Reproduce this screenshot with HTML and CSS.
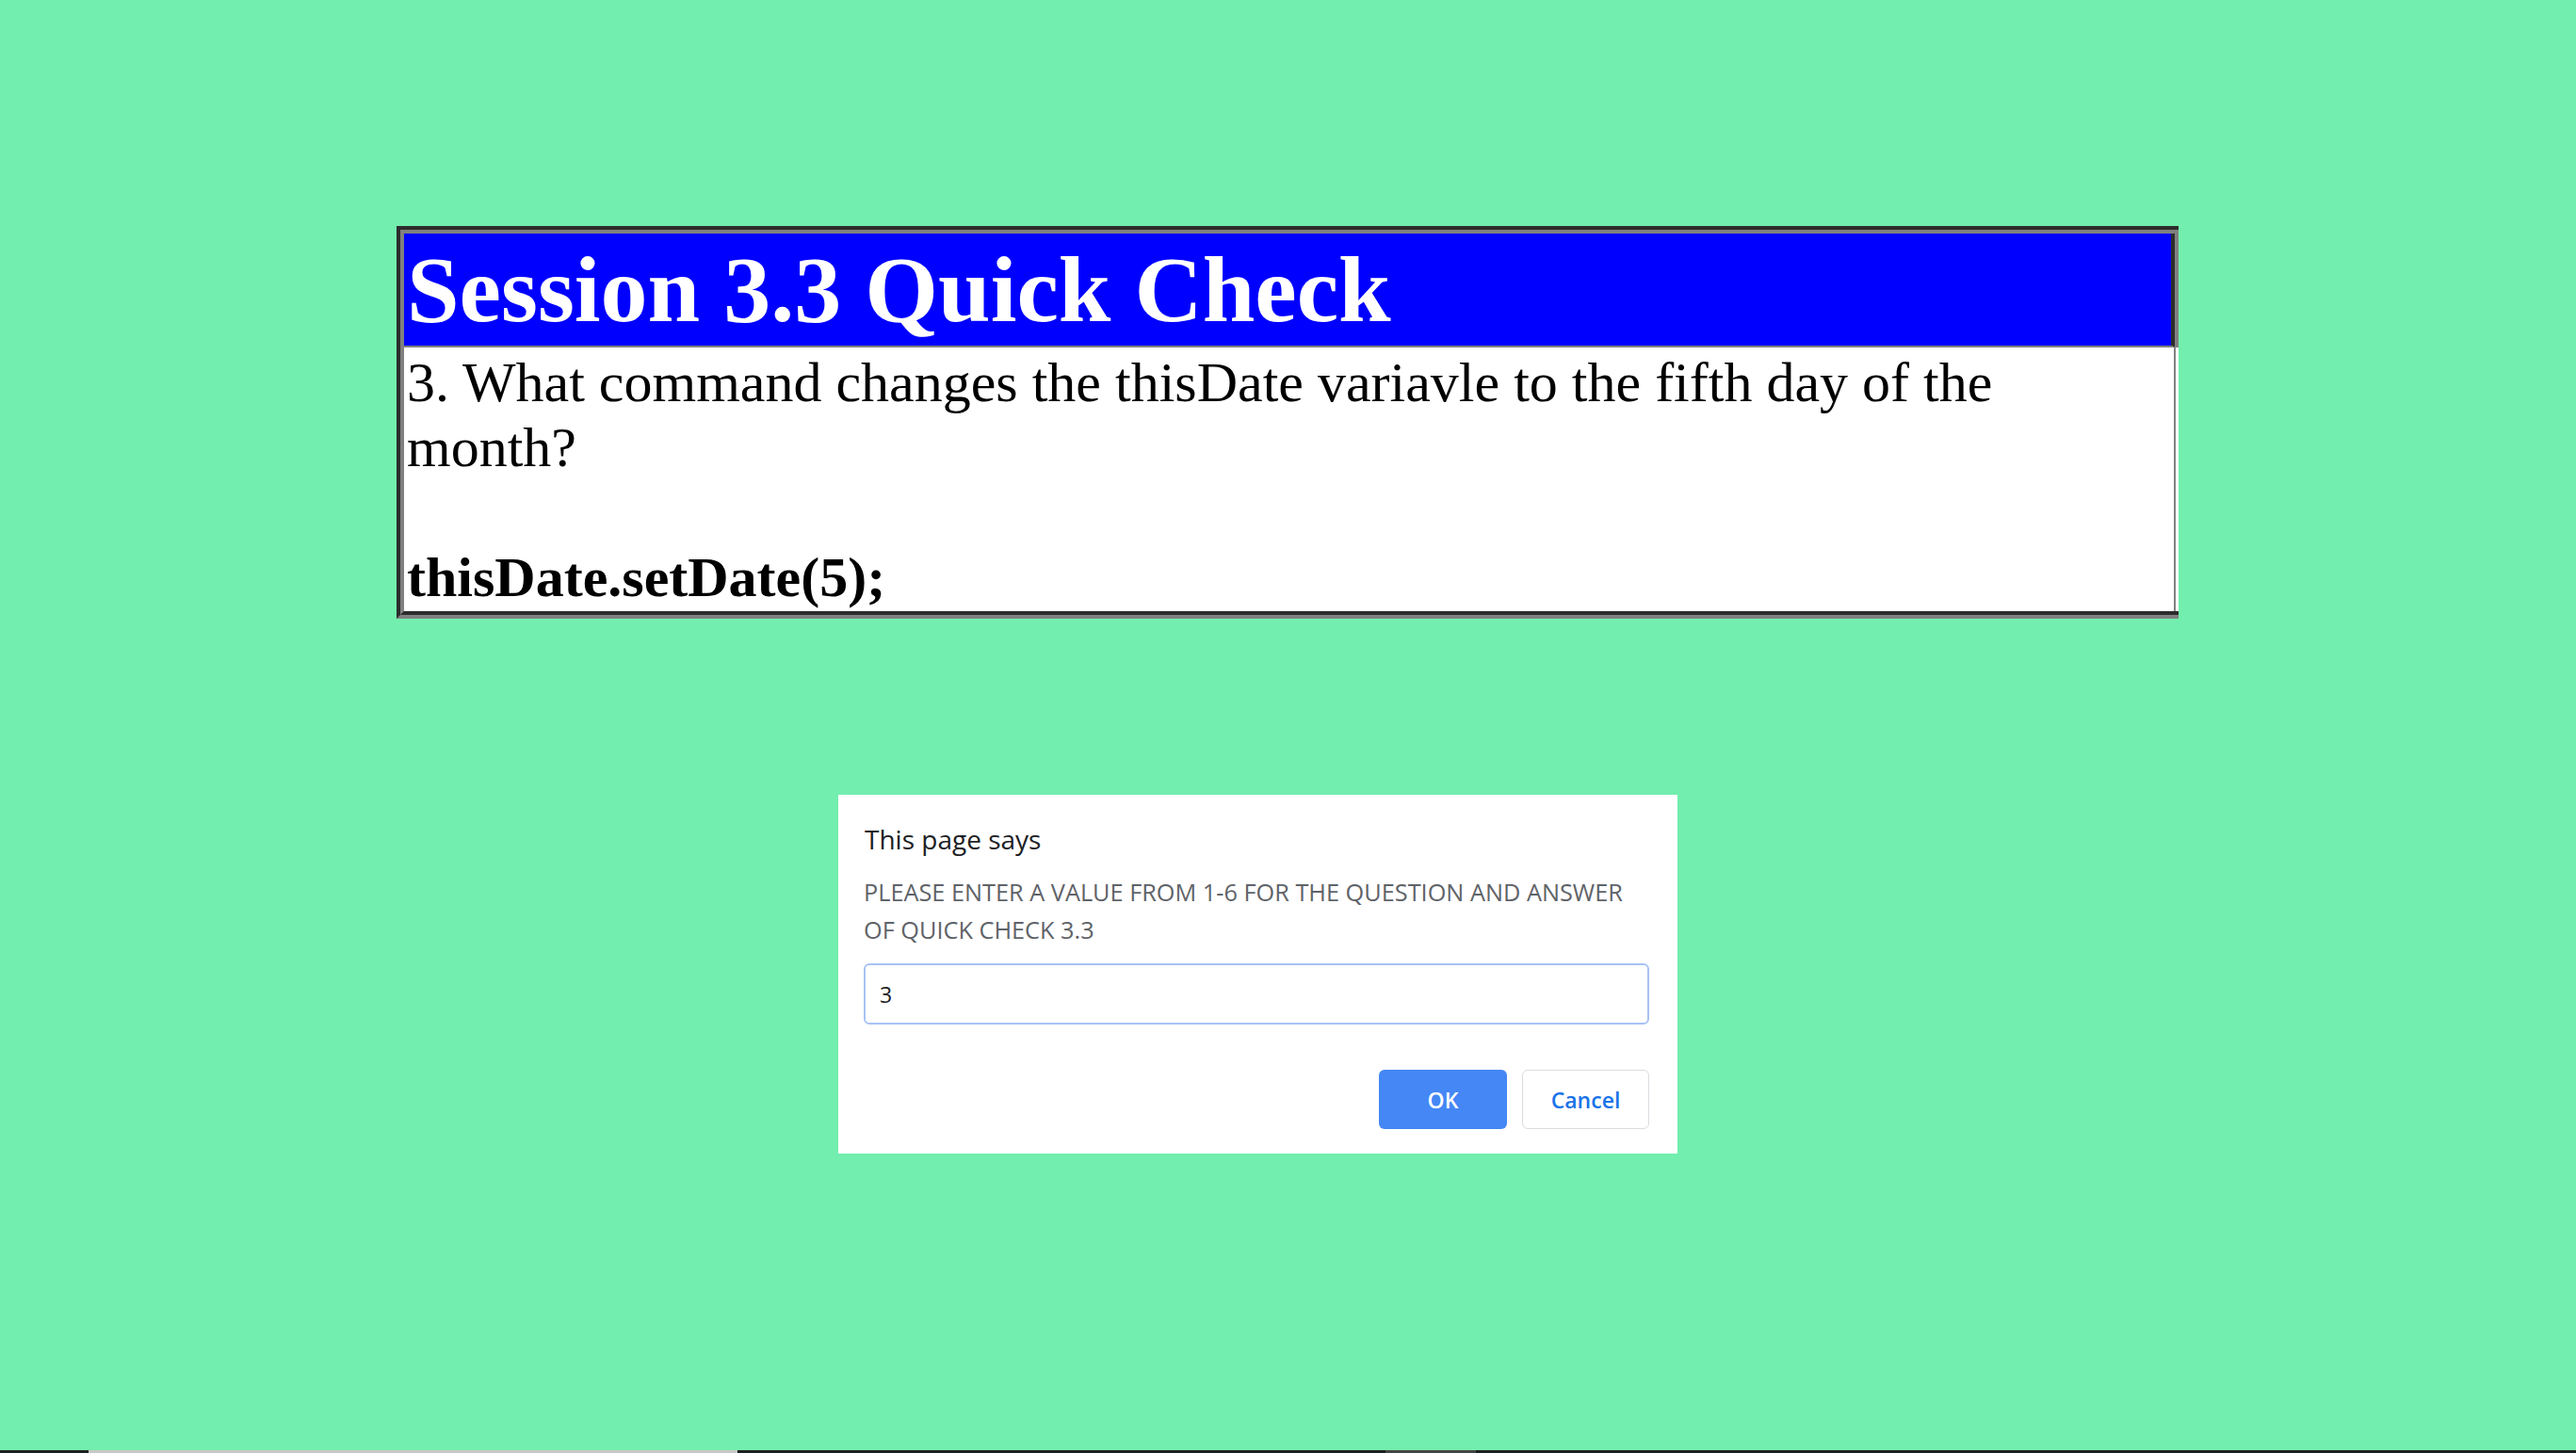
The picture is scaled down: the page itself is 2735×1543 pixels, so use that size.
FILE: index.html
```html
<!DOCTYPE html>
<html lang="en">
<head>
<meta charset="utf-8">
<title>Session 3.3 Quick Check</title>
<link rel="stylesheet" href="styles.css">
</head>
<body>
  <main class="page">
    <section class="card">
      <h1 class="card-head">Session 3.3 Quick Check</h1>
      <div class="card-body">3. What command changes the thisDate variavle to the fifth day of the month?<br><br><strong>thisDate.setDate(5);</strong></div>
    </section>
  </main>

  <div class="dialog" role="dialog">
    <div class="dialog-title">This page says</div>
    <div class="dialog-msg">PLEASE ENTER A VALUE FROM 1-6 FOR THE QUESTION AND ANSWER OF QUICK CHECK 3.3</div>
    <div class="dialog-input">3</div>
    <div class="dialog-actions">
      <button class="btn btn-ok">OK</button>
      <button class="btn btn-cancel">Cancel</button>
    </div>
  </div>

  <div class="taskbar">
    <span class="seg seg-dark seg-a"></span>
    <span class="seg seg-light"></span>
    <span class="seg seg-dark seg-b"></span>
    <span class="seg seg-mid"></span>
    <span class="seg seg-dark seg-rest"></span>
  </div>
</body>
</html>
```

FILE: styles.css
```css
html, body {
  height: 100%;
}

body {
  margin: 0;
  background: #72eeae;
  display: flex;
  flex-direction: column;
  font-family: "Liberation Serif", "Times New Roman", serif;
  position: relative;
  overflow: hidden;
}

.page {
  flex: 1;
  padding: 240px 0 0 421px;
}

.card {
  width: 1892px;
  box-sizing: border-box;
  border: 8px groove #808080;
  border-right: none;
}

.card-head {
  margin: 0;
  background: #0000ff;
  color: #ffffff;
  font-family: "Liberation Serif", "Times New Roman", serif;
  font-weight: bold;
  font-size: 100px;
  line-height: 115px;
  padding: 2px 3px 2px;
  border-right: 8px groove #808080;
  border-bottom: 2px solid #808080;
  white-space: nowrap;
}

.card-body {
  background: #ffffff;
  color: #000000;
  font-size: 60px;
  line-height: 69px;
  padding: 3px 10px 1px 3px;
  border-right: 3px solid #ffffff;
  box-shadow: inset -2px 0 0 #808080;
}

.card-body strong {
  font-weight: bold;
}

/* Browser prompt dialog */
.dialog {
  position: absolute;
  left: 890px;
  top: 844px;
  width: 834px;
  padding: 28px 30px 26px 27px;
  background: #ffffff;
  font-family: "Open Sans", "Noto Sans", sans-serif;
}

.dialog-title {
  font-size: 28px;
  line-height: 38px;
  color: #202124;
  padding-left: 1px;
}

.dialog-msg {
  margin-top: 17px;
  max-width: 815px;
  font-size: 25.3px;
  line-height: 40px;
  color: #5f6368;
}

.dialog-input {
  margin-top: 16px;
  height: 61px;
  box-sizing: content-box;
  border: 2px solid #a8c3f5;
  border-radius: 6px;
  padding: 0 15px;
  display: flex;
  align-items: center;
  font-size: 23px;
  color: #202124;
}

.dialog-actions {
  margin-top: 48px;
  display: flex;
  justify-content: flex-end;
  gap: 16px;
}

.btn {
  height: 63px;
  width: 136px;
  border-radius: 6px;
  font-family: "Open Sans", "Noto Sans", sans-serif;
  font-size: 23px;
  font-weight: 600;
  padding: 0;
  cursor: pointer;
}

.btn-ok {
  background: #4487f5;
  border: none;
  color: #ffffff;
}

.btn-cancel {
  background: #ffffff;
  border: 1px solid #dadce0;
  color: #1a73e8;
  width: 135px;
}

/* bottom strip */
.taskbar {
  display: flex;
  height: 3px;
  flex: none;
}

.seg {
  display: block;
  height: 100%;
}

.seg-dark { background: #1f1f1f; }
.seg-light { background: #c8c8c8; width: 689px; }
.seg-mid { background: #454545; width: 96px; }
.seg-a { width: 94px; }
.seg-b { width: 688px; }
.seg-rest { flex: 1; }
```
